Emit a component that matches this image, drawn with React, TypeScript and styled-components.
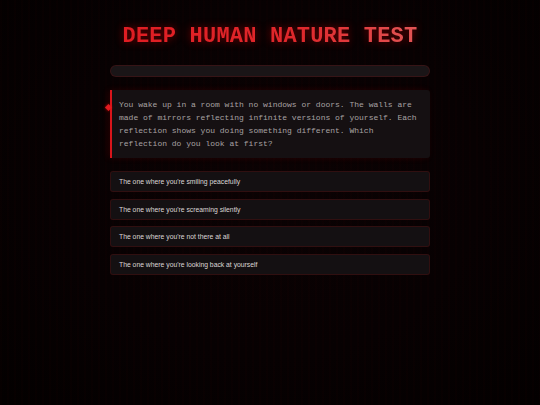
import React, { FC } from 'react'
import styled, { createGlobalStyle } from 'styled-components'

const GlobalStyle = createGlobalStyle`
  html, body {
    margin: 0;
    padding: 0;
    background: #000;
  }
  body {
    min-height: 405px;
    font-family: 'Liberation Sans', Arial, sans-serif;
  }
`

const options = [
  "The one where you're smiling peacefully",
  "The one where you're screaming silently",
  "The one where you're not there at all",
  "The one where you're looking back at yourself",
]

const App: FC = () => {
  return (
    <>
      <GlobalStyle />
      <Page>
        <Container>
          <Title>DEEP HUMAN NATURE TEST</Title>
          <Progress>
            <ProgressFill style={{ width: '0%' }} />
          </Progress>
          <Question>
            <Marker />
            You wake up in a room with no windows or doors. The walls are
            made of mirrors reflecting infinite versions of yourself. Each
            reflection shows you doing something different. Which
            reflection do you look at first?
          </Question>
          <Options>
            {options.map((o) => (
              <Option key={o}>{o}</Option>
            ))}
          </Options>
        </Container>
      </Page>
    </>
  )
}

const Page = styled.div`
  min-height: 405px;
  background:
    repeating-linear-gradient(
      90deg,
      rgba(255, 0, 0, 0.01) 0px,
      rgba(255, 0, 0, 0.01) 2px,
      transparent 2px,
      transparent 7px
    ),
    radial-gradient(ellipse at 50% 45%, #0b0203 0%, #070102 55%, #030000 100%);
  padding-top: 24px;
  box-sizing: border-box;
`

const Container = styled.div`
  width: 320px;
  margin: 0 auto;
  display: flex;
  flex-direction: column;
`

const Title = styled.h1`
  margin: 0;
  font-family: 'Courier New', 'Liberation Mono', monospace;
  font-size: 22px;
  font-weight: bold;
  line-height: 25px;
  letter-spacing: 0.2px;
  text-align: center;
  background: linear-gradient(90deg, #e01c22 0%, #e0282c 60%, #e25a5a 100%);
  -webkit-background-clip: text;
  background-clip: text;
  color: transparent;
  filter: drop-shadow(0 0 4px rgba(255, 0, 0, 0.45));
`

const Progress = styled.div`
  margin-top: 16px;
  height: 12px;
  border-radius: 6px;
  background: #1a1517;
  border: 1px solid rgba(120, 20, 20, 0.3);
  box-sizing: border-box;
  overflow: hidden;
`

const ProgressFill = styled.div`
  height: 100%;
  background: #c0181e;
`

const Question = styled.div`
  position: relative;
  margin-top: 13px;
  padding: 8px 8px 8px 7px;
  background: #151012;
  border-left: 2px solid #d8151b;
  border-radius: 0 3px 3px 0;
  font-family: 'Courier New', 'Liberation Mono', monospace;
  font-size: 8px;
  line-height: 13px;
  color: #a8a2a2;
  box-shadow: -2px 0 6px rgba(255, 0, 0, 0.12);
`

const Marker = styled.span`
  position: absolute;
  left: -6px;
  top: 15px;
  width: 5px;
  height: 5px;
  background: #e01b20;
  transform: rotate(45deg);
  box-shadow: 0 0 3px rgba(255, 0, 0, 0.7);
`

const Options = styled.div`
  margin-top: 13px;
  display: flex;
  flex-direction: column;
  gap: 6.5px;
`

const Option = styled.div`
  height: 21px;
  box-sizing: border-box;
  display: flex;
  align-items: center;
  padding: 0 8px;
  background: #141012;
  border: 1px solid rgba(100, 14, 14, 0.35);
  border-radius: 3px;
  font-size: 6.8px;
  color: #dcd6d6;
`

export default App
